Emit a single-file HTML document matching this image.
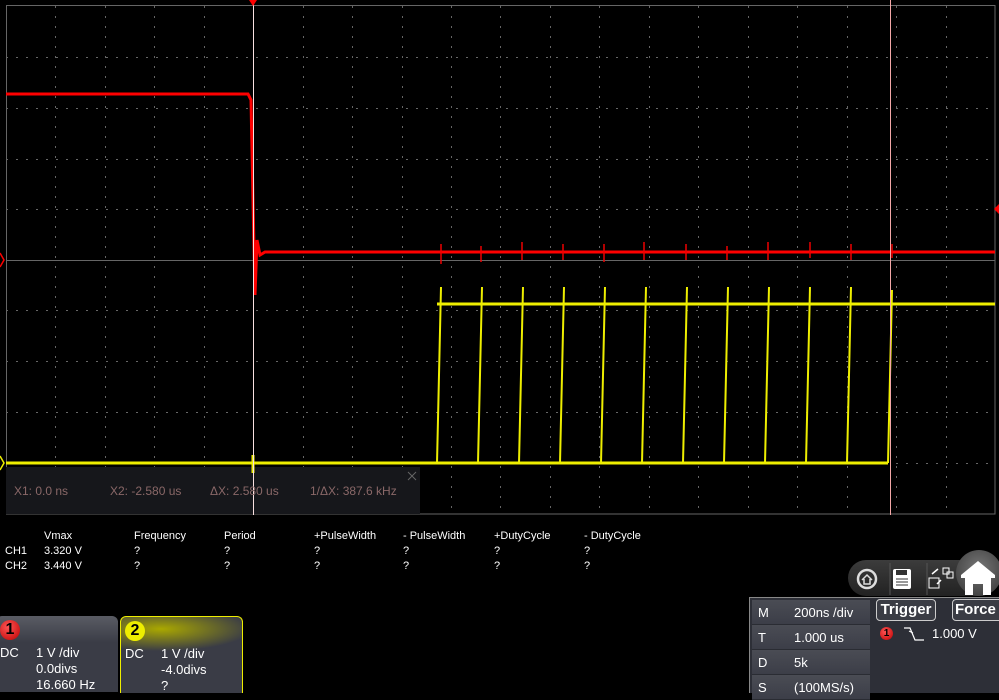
<!DOCTYPE html>
<html><head><meta charset="utf-8"><style>
body{margin:0;background:#000;width:999px;height:692px;overflow:hidden;position:relative;font-family:"Liberation Sans",sans-serif;}
.a{position:absolute;}
.m{color:#fff;font-size:11px;position:absolute;}
.ch{position:absolute;top:616px;height:76px;border-radius:6px 6px 0 0;background:linear-gradient(#5a5c64,#3a3c46 35%,#3a3c46);color:#fff;font-size:13px;}
.row{position:absolute;left:752px;width:118px;height:24px;color:#fff;font-size:13px;background:linear-gradient(#4a4c54,#3c3e48);border-bottom:1px solid #2a2c33;}
</style></head><body>
<svg class="a" style="left:0;top:0" width="999" height="520">
<g stroke="#666" stroke-width="1" stroke-dasharray="2,8">
<line x1="6" y1="57.5" x2="995" y2="57.5"/><line x1="6" y1="108.5" x2="995" y2="108.5"/><line x1="6" y1="159.5" x2="995" y2="159.5"/><line x1="6" y1="209.5" x2="995" y2="209.5"/><line x1="6" y1="310.5" x2="995" y2="310.5"/><line x1="6" y1="361.5" x2="995" y2="361.5"/><line x1="6" y1="412.5" x2="995" y2="412.5"/><line x1="6" y1="463.5" x2="995" y2="463.5"/>
<line x1="55.5" y1="6" x2="55.5" y2="514"/><line x1="105.5" y1="6" x2="105.5" y2="514"/><line x1="154.5" y1="6" x2="154.5" y2="514"/><line x1="204.5" y1="6" x2="204.5" y2="514"/><line x1="303.5" y1="6" x2="303.5" y2="514"/><line x1="352.5" y1="6" x2="352.5" y2="514"/><line x1="402.5" y1="6" x2="402.5" y2="514"/><line x1="451.5" y1="6" x2="451.5" y2="514"/><line x1="550.5" y1="6" x2="550.5" y2="514"/><line x1="599.5" y1="6" x2="599.5" y2="514"/><line x1="649.5" y1="6" x2="649.5" y2="514"/><line x1="698.5" y1="6" x2="698.5" y2="514"/><line x1="748.5" y1="6" x2="748.5" y2="514"/><line x1="797.5" y1="6" x2="797.5" y2="514"/><line x1="847.5" y1="6" x2="847.5" y2="514"/><line x1="896.5" y1="6" x2="896.5" y2="514"/><line x1="946.5" y1="6" x2="946.5" y2="514"/>
</g>
<rect x="6.5" y="5.5" width="988.5" height="508.5" fill="none" stroke="#666"/>
<line x1="6" y1="260.5" x2="995" y2="260.5" stroke="#666"/>
<line x1="500.5" y1="6" x2="500.5" y2="514" stroke="#666" stroke-dasharray="2,8"/>
<rect x="6" y="467" width="414" height="47" fill="#16171b"/>
<polyline points="6,94 248,94 251,100 253,200 255,295 257,240 260,255 265,252 995,252" fill="none" stroke="#f00" stroke-width="3"/>
<g stroke="#e00" stroke-width="1.5">
<path d="M441,244v20M481,246v16M522,242v18M563,244v16M604,244v18M644,242v18M686,244v16M727,246v14M768,242v18M810,242v16M851,244v16M892,244v14"/>
</g>
<polyline points="6,463 888,463" fill="none" stroke="#ee0" stroke-width="3"/>
<polyline points="437,304 995,304" fill="none" stroke="#ee0" stroke-width="3"/>
<g stroke="#ee0" stroke-width="2">
<path d="M437,463L441,287M478,463L482,287M519,463L523,287M560,463L564,287M601,463L605,287M642,463L646,287M683,463L687,287M724,463L728,287M765,463L769,287M806,463L810,287M847,463L851,287M888,463L892,290"/>
</g>
<path d="M253,455v18" stroke="#ee0" stroke-width="3"/>
<line x1="253.5" y1="0" x2="253.5" y2="515" stroke="#f8e0e0"/>
<line x1="890.5" y1="0" x2="890.5" y2="515" stroke="#f4a8a8"/>
<path d="M249,0h8l-4,6z" fill="#f00"/>
<path d="M999,204v10l-5,-5z" fill="#f00"/>
<path d="M0,253l4,7l-4,7" fill="none" stroke="#f00" stroke-width="1.5"/>
<path d="M0,456l4,7l-4,7" fill="none" stroke="#ee0" stroke-width="1.5"/>
<path d="M408,472l8,8M416,472l-8,8" stroke="#666"/>
<g font-family="Liberation Sans,sans-serif" font-size="12" fill="#8a6868">
<text x="14" y="495">X1: 0.0 ns</text><text x="110" y="495">X2: -2.580 us</text><text x="210" y="495">ΔX: 2.580 us</text><text x="310" y="495">1/ΔX: 387.6 kHz</text>
</g>
</svg>
<div class="m" style="left:44px;top:530px">Vmax</div><div class="m" style="left:134px;top:530px">Frequency</div><div class="m" style="left:224px;top:530px">Period</div><div class="m" style="left:314px;top:530px">+PulseWidth</div><div class="m" style="left:403px;top:530px">- PulseWidth</div><div class="m" style="left:494px;top:530px">+DutyCycle</div><div class="m" style="left:584px;top:530px">- DutyCycle</div>
<div class="m" style="left:5px;top:545px">CH1</div><div class="m" style="left:44px;top:545px">3.320 V</div><div class="m" style="left:134px;top:545px">?</div><div class="m" style="left:224px;top:545px">?</div><div class="m" style="left:314px;top:545px">?</div><div class="m" style="left:403px;top:545px">?</div><div class="m" style="left:494px;top:545px">?</div><div class="m" style="left:584px;top:545px">?</div>
<div class="m" style="left:5px;top:560px">CH2</div><div class="m" style="left:44px;top:560px">3.440 V</div><div class="m" style="left:134px;top:560px">?</div><div class="m" style="left:224px;top:560px">?</div><div class="m" style="left:314px;top:560px">?</div><div class="m" style="left:403px;top:560px">?</div><div class="m" style="left:494px;top:560px">?</div><div class="m" style="left:584px;top:560px">?</div>

<div class="ch" style="left:-4px;width:122px;">
<div class="a" style="left:4px;top:4px;width:20px;height:20px;border-radius:50%;background:radial-gradient(circle at 40% 35%,#f55,#b00);color:#000;font-weight:bold;font-size:16px;text-align:center;line-height:20px">1</div>
<div class="a" style="left:4px;top:29px">DC</div><div class="a" style="left:40px;top:29px">1 V /div</div>
<div class="a" style="left:40px;top:45px">0.0divs</div><div class="a" style="left:40px;top:61px">16.660 Hz</div></div>
<div class="ch" style="left:120px;width:121px;border:1px solid #ee0;border-bottom:none;background:radial-gradient(ellipse 90px 22px at 40px 12px,#aaa800,#3a3c46 100%);">
<div class="a" style="left:4px;top:4px;width:20px;height:20px;border-radius:50%;background:#ee0;color:#000;font-weight:bold;font-size:16px;text-align:center;line-height:20px">2</div>
<div class="a" style="left:4px;top:29px">DC</div><div class="a" style="left:40px;top:29px">1 V /div</div>
<div class="a" style="left:40px;top:45px">-4.0divs</div><div class="a" style="left:40px;top:61px">?</div></div>

<div class="a" style="left:848px;top:560px;width:130px;height:36px;border-radius:18px 0 0 18px;background:linear-gradient(#3c3c3c,#222);"></div>
<div class="a" style="left:956px;top:550px;width:46px;height:46px;border-radius:50%;background:radial-gradient(circle at 50% 40%,#777,#333);"></div>
<svg class="a" style="left:848px;top:555px" width="151" height="45">
<circle cx="19" cy="24" r="9" fill="none" stroke="#ddd" stroke-width="2.5"/><path d="M14,25l5,-5l5,5M16,24v5h6v-5" fill="none" stroke="#ddd" stroke-width="1.5"/>
<line x1="42" y1="8" x2="42" y2="40" stroke="#555"/><line x1="79" y1="8" x2="79" y2="40" stroke="#555"/>
<rect x="45" y="14" width="18" height="20" rx="2" fill="#fff"/><rect x="48" y="15" width="11" height="5" fill="#333"/><path d="M48,24h12M48,27h12M48,30h12" stroke="#333"/>
<rect x="81" y="23" width="10" height="10" fill="none" stroke="#fff"/><rect x="95" y="13" width="6" height="6" fill="none" stroke="#fff"/><rect x="99" y="17" width="6" height="6" fill="none" stroke="#fff"/>
<path d="M84,19l6,-5M93,25l-4,4" stroke="#fff" stroke-width="1.5"/>
<path d="M113,20l17,-14l17,14v3h-4v17h-8v-11h-10v11h-8v-17h-4z" fill="#fff"/>
</svg>

<div class="a" style="left:749px;top:597px;width:124px;height:95px;background:#2d2f37;border:1px solid #888;border-bottom:none"></div>
<div class="row" style="top:600px"><span class="a" style="left:6px;top:5px">M</span><span class="a" style="left:42px;top:5px">200ns /div</span></div>
<div class="row" style="top:625px"><span class="a" style="left:6px;top:5px">T</span><span class="a" style="left:42px;top:5px">1.000 us</span></div>
<div class="row" style="top:650px"><span class="a" style="left:6px;top:5px">D</span><span class="a" style="left:42px;top:5px">5k</span></div>
<div class="row" style="top:675px"><span class="a" style="left:6px;top:5px">S</span><span class="a" style="left:42px;top:5px">(100MS/s)</span></div>
<div class="a" style="left:874px;top:597px;width:125px;height:95px;background:#2d2f37;border-top:1px solid #888"></div>
<div class="a" style="left:876px;top:599px;width:58px;height:20px;border:1px solid #ccc;border-radius:4px;color:#fff;font-weight:bold;font-size:15px;text-align:center;line-height:20px;background:#3a3c44">Trigger</div>
<div class="a" style="left:952px;top:599px;width:50px;height:20px;border:1px solid #ccc;border-radius:4px;color:#fff;font-weight:bold;font-size:15px;padding-left:2px;line-height:20px;background:#3a3c44">Force</div>
<div class="a" style="left:880px;top:627px;width:13px;height:13px;border-radius:50%;background:radial-gradient(circle at 40% 35%,#f55,#b00);color:#000;font-size:10px;font-weight:bold;text-align:center;line-height:13px">1</div>
<svg class="a" style="left:903px;top:624px" width="24" height="20"><path d="M1,4h6l5,12h9" fill="none" stroke="#fff" stroke-width="1.2"/><path d="M6,7l4,2" stroke="#fff"/></svg>
<div class="a" style="left:932px;top:626px;color:#fff;font-size:13px">1.000 V</div>
</body></html>
